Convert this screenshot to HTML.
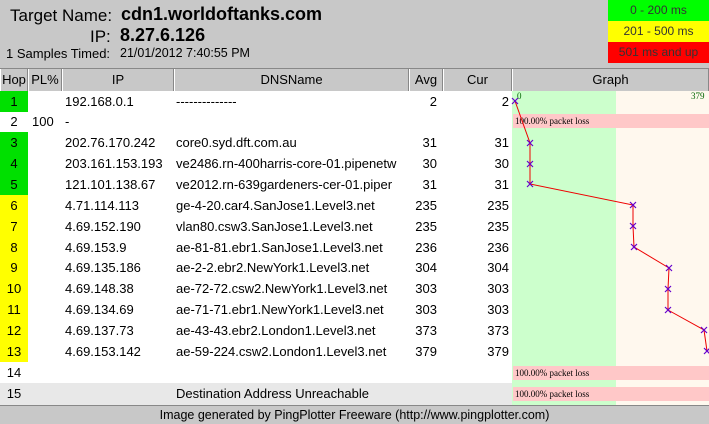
<!DOCTYPE html>
<html><head><style>
*{margin:0;padding:0;box-sizing:border-box}
body{width:709px;height:424px;position:relative;overflow:hidden;background:#fff;font-family:"Liberation Sans",sans-serif;font-size:13px;color:#000}
.a{position:absolute;white-space:nowrap}
.hd{position:absolute;top:0;left:0;width:709px;height:69px;background:#c8c8c8}
.th{position:absolute;top:69px;height:22px;background:#c8c8c8;border-left:1px solid #fff;border-right:1px solid #888;text-align:center;line-height:21px;font-size:13px}
.r{position:absolute;left:0;width:512px;height:21px;line-height:21px}
.r span{position:absolute;top:0}
.h{left:0;width:28px;text-align:center}
.pl{left:32px}
.ip{left:65px}
.dn{left:176px;width:232px;overflow:hidden}
.av{left:410px;width:27px;text-align:right}
.cu{left:443px;width:66px;text-align:right}
.loss{position:absolute;left:513px;width:196px;height:14px;background:#ffc8c8;font-family:"Liberation Serif",serif;font-size:9px;line-height:14px;padding-left:2px}
</style></head><body>
<div class="hd"></div>
<div class="a" style="left:10px;top:6px;font-size:17px">Target Name:</div>
<div class="a" style="left:121px;top:4px;font-size:18px;font-weight:bold">cdn1.worldoftanks.com</div>
<div class="a" style="left:90px;top:27px;font-size:17px">IP:</div>
<div class="a" style="left:120px;top:25px;font-size:18px;font-weight:bold">8.27.6.126</div>
<div class="a" style="left:6px;top:46px;font-size:13px">1 Samples Timed:</div>
<div class="a" style="left:120px;top:46px;font-size:12.5px">21/01/2012 7:40:55 PM</div>
<div class="a" style="left:608px;top:0;width:101px;height:21px;background:#00ff00;text-align:center;line-height:20px;font-size:12px;color:#333">0 - 200 ms</div>
<div class="a" style="left:608px;top:21px;width:101px;height:21px;background:#ffff00;text-align:center;line-height:21px;font-size:12px;color:#333">201 - 500 ms</div>
<div class="a" style="left:608px;top:42px;width:101px;height:21px;background:#ff0000;text-align:center;line-height:21px;font-size:12px;color:#333">501 ms and up</div>
<div class="a" style="left:0;top:68px;width:709px;height:1px;background:#888"></div>

<div class="th" style="left:0;width:28px">Hop</div>
<div class="th" style="left:28px;width:34px">PL%</div>
<div class="th" style="left:62px;width:112px">IP</div>
<div class="th" style="left:174px;width:235px">DNSName</div>
<div class="th" style="left:409px;width:34px">Avg</div>
<div class="th" style="left:443px;width:69px">Cur</div>
<div class="th" style="left:512px;width:197px">Graph</div>

<div class="a" style="left:512px;top:91px;width:104px;height:314px;background:#ccffcc"></div>
<div class="a" style="left:616px;top:91px;width:93px;height:314px;background:#fff8ee"></div>
<div class="a" style="left:0;top:383px;width:512px;height:22px;background:#e8e8e8"></div>
<div class="a" style="left:0;top:91px;width:28px;height:21px;background:#00e000"></div>
<div class="a" style="left:0;top:132px;width:28px;height:63px;background:#00e000"></div>
<div class="a" style="left:0;top:195px;width:28px;height:167px;background:#ffff00"></div>

<div class="a" style="left:517px;top:91px;font-size:9px;color:#060;font-family:'Liberation Serif',serif">0</div>
<div class="a" style="left:691px;top:91px;font-size:9px;color:#060;font-family:'Liberation Serif',serif">379</div>
<div class="loss" style="top:114px">100.00% packet loss</div>
<div class="loss" style="top:366px">100.00% packet loss</div>
<div class="loss" style="top:387px">100.00% packet loss</div>

<svg class="a" style="left:0;top:0" width="709" height="424">
<polyline points="515,101 530,143 530,164 530,184 633,205 633,226 634,247 669,268 668,289 668,310 704,330 707,351" fill="none" stroke="#e00" stroke-width="1"/>
<g stroke="#60c" stroke-width="1.2">
<path d="M512,98l6,6M518,98l-6,6M527,140l6,6M533,140l-6,6M527,161l6,6M533,161l-6,6M527,181l6,6M533,181l-6,6M630,202l6,6M636,202l-6,6M630,223l6,6M636,223l-6,6M631,244l6,6M637,244l-6,6M666,265l6,6M672,265l-6,6M665,286l6,6M671,286l-6,6M665,307l6,6M671,307l-6,6M701,327l6,6M707,327l-6,6M704,348l6,6M710,348l-6,6"/>
</g>
</svg>

<div class="r" style="top:91px"><span class="h">1</span><span class="ip">192.168.0.1</span><span class="dn">--------------</span><span class="av">2</span><span class="cu">2</span></div>
<div class="r" style="top:111px"><span class="h">2</span><span class="pl">100</span><span class="ip">-</span></div>
<div class="r" style="top:132px"><span class="h">3</span><span class="ip">202.76.170.242</span><span class="dn">core0.syd.dft.com.au</span><span class="av">31</span><span class="cu">31</span></div>
<div class="r" style="top:153px"><span class="h">4</span><span class="ip">203.161.153.193</span><span class="dn">ve2486.rn-400harris-core-01.pipenetw</span><span class="av">30</span><span class="cu">30</span></div>
<div class="r" style="top:174px"><span class="h">5</span><span class="ip">121.101.138.67</span><span class="dn">ve2012.rn-639gardeners-cer-01.piper</span><span class="av">31</span><span class="cu">31</span></div>
<div class="r" style="top:195px"><span class="h">6</span><span class="ip">4.71.114.113</span><span class="dn">ge-4-20.car4.SanJose1.Level3.net</span><span class="av">235</span><span class="cu">235</span></div>
<div class="r" style="top:216px"><span class="h">7</span><span class="ip">4.69.152.190</span><span class="dn">vlan80.csw3.SanJose1.Level3.net</span><span class="av">235</span><span class="cu">235</span></div>
<div class="r" style="top:237px"><span class="h">8</span><span class="ip">4.69.153.9</span><span class="dn">ae-81-81.ebr1.SanJose1.Level3.net</span><span class="av">236</span><span class="cu">236</span></div>
<div class="r" style="top:257px"><span class="h">9</span><span class="ip">4.69.135.186</span><span class="dn">ae-2-2.ebr2.NewYork1.Level3.net</span><span class="av">304</span><span class="cu">304</span></div>
<div class="r" style="top:278px"><span class="h">10</span><span class="ip">4.69.148.38</span><span class="dn">ae-72-72.csw2.NewYork1.Level3.net</span><span class="av">303</span><span class="cu">303</span></div>
<div class="r" style="top:299px"><span class="h">11</span><span class="ip">4.69.134.69</span><span class="dn">ae-71-71.ebr1.NewYork1.Level3.net</span><span class="av">303</span><span class="cu">303</span></div>
<div class="r" style="top:320px"><span class="h">12</span><span class="ip">4.69.137.73</span><span class="dn">ae-43-43.ebr2.London1.Level3.net</span><span class="av">373</span><span class="cu">373</span></div>
<div class="r" style="top:341px"><span class="h">13</span><span class="ip">4.69.153.142</span><span class="dn">ae-59-224.csw2.London1.Level3.net</span><span class="av">379</span><span class="cu">379</span></div>
<div class="r" style="top:362px"><span class="h">14</span></div>
<div class="r" style="top:383px"><span class="h">15</span><span style="left:176px">Destination Address Unreachable</span></div>

<div class="a" style="left:0;top:405px;width:709px;height:19px;background:#c8c8c8;border-top:1px solid #888;text-align:center;line-height:18px;font-size:12.5px">Image generated by PingPlotter Freeware (http://www.pingplotter.com)</div>
</body></html>
